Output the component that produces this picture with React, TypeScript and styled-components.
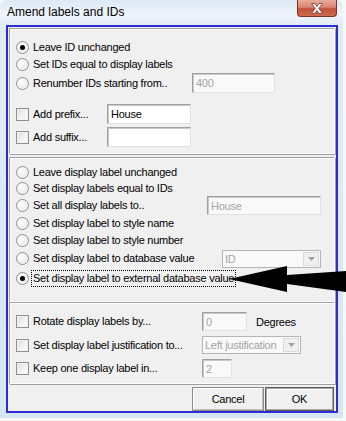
import React from 'react';
import styled, { createGlobalStyle } from 'styled-components';

const Global = createGlobalStyle`
  html, body { margin: 0; padding: 0; background: #f7f8f8; }
  body {
    width: 346px; height: 421px; overflow: hidden;
    font-family: "Liberation Sans", Arial, sans-serif;
    font-size: 11px; color: #000;
    letter-spacing: -0.25px;
  }
  * { box-sizing: border-box; }
`;

const Window = styled.div`
  position: relative;
  width: 343px;
  height: 418px;
  border-radius: 7px 7px 0 0;
  background: linear-gradient(to bottom, #dce8f5 0px, #eef4fb 14px, #e2ecf6 25px, #d5e5f2 100%);
  padding: 0 5px 5px 6px;
  display: flex;
  flex-direction: column;
`;

const TitleBar = styled.div`
  height: 25px;
  display: flex;
  align-items: flex-start;
  padding: 0 1px 0 1px;
`;

const Title = styled.div`
  flex: 1;
  padding-top: 5px;
  font-family: "Liberation Sans", Arial, sans-serif;
  font-size: 12px;
  letter-spacing: 0;
  color: #000;
`;

const CloseButton = styled.div`
  width: 40px;
  height: 17px;
  border: 1px solid #7a3228;
  border-top: none;
  border-radius: 0 0 4px 4px;
  background: linear-gradient(to bottom, #e9ab9c 0%, #d98470 45%, #c2503a 55%, #cf6a50 100%);
  display: flex;
  align-items: center;
  justify-content: center;
`;

const Client = styled.div`
  flex: 1;
  border: 2px solid #2c2cd2;
  background: #f0f0f0;
  padding: 1px 1px 0 1px;
  display: flex;
  flex-direction: column;
`;

const Panel = styled.div<{ $pt: number; $pb: number; $mt?: number }>`
  margin-top: ${(p) => p.$mt ?? 0}px;
  border-top: 1px solid #a0a0a0;
  border-left: 1px solid #a0a0a0;
  border-bottom: 1px solid #ffffff;
  border-right: 1px solid #ffffff;
  box-shadow: inset 1px 1px 0 #ffffff, 1px 1px 0 #a0a0a0;
  padding: ${(p) => p.$pt}px 0 ${(p) => p.$pb}px 6px;
  display: flex;
  flex-direction: column;
`;

const Row = styled.div<{ $h: number; $mt?: number }>`
  height: ${(p) => p.$h}px;
  margin-top: ${(p) => p.$mt ?? 0}px;
  display: flex;
  align-items: center;
`;

const RadioCircle = styled.span<{ $on?: boolean }>`
  position: relative;
  width: 13px;
  height: 13px;
  flex: none;
  border-radius: 50%;
  border: 1px solid #8e8f8f;
  background: radial-gradient(circle at 35% 35%, #ffffff 0%, #f2f2f2 45%, #d8d8d8 100%);
  box-shadow: inset 0 0 0 1px #f6f6f6;
  &::after {
    content: '';
    display: ${(p) => (p.$on ? 'block' : 'none')};
    position: absolute;
    left: 3px;
    top: 3px;
    width: 5px;
    height: 5px;
    border-radius: 50%;
    background: #000;
  }
`;

const CheckBox = styled.span`
  width: 13px;
  height: 13px;
  flex: none;
  border: 1px solid #8e8f8f;
  background: linear-gradient(135deg, #dcdcdc 0%, #f4f4f4 60%, #ffffff 100%);
  box-shadow: inset 0 0 0 1px #f2f2f2;
`;

const Label = styled.span<{ $w?: number; $focus?: boolean }>`
  margin-left: ${(p) => (p.$focus ? 2 : 4)}px;
  ${(p) => (p.$w ? `width: ${p.$w}px; flex: none;` : '')}
  white-space: nowrap;
  line-height: 15px;
  ${(p) =>
    p.$focus
      ? `border: 1px dotted #000; padding: 0 1px; height: 17px;`
      : ''}
`;

const TextBox = styled.div<{ $w: number; $h: number; $disabled?: boolean }>`
  width: ${(p) => p.$w}px;
  height: ${(p) => p.$h}px;
  flex: none;
  border-top: 1px solid #a0a0a0;
  border-left: 1px solid #a0a0a0;
  border-bottom: 1px solid #e3e3e3;
  border-right: 1px solid #e3e3e3;
  box-shadow: inset 1px 1px 0 #c8c8c8;
  background: ${(p) => (p.$disabled ? '#f9f9f9' : '#ffffff')};
  color: ${(p) => (p.$disabled ? '#a3a3a3' : '#000')};
  padding: 2px 0 0 3px;
  line-height: 14px;
  white-space: nowrap;
  overflow: hidden;
`;

const Combo = styled.div<{ $w: number }>`
  width: ${(p) => p.$w}px;
  height: 18px;
  flex: none;
  display: flex;
  border: 1px solid #b5b5b5;
  background: #f9f9f9;
  color: #a3a3a3;
`;

const ComboText = styled.div`
  flex: 1;
  min-width: 0;
  padding: 1px 0 0 2px;
  line-height: 14px;
  white-space: nowrap;
  overflow: hidden;
`;

const ComboButton = styled.div`
  width: 16px;
  flex: none;
  margin: 1px;
  border: 1px solid #dadada;
  background: #f0f0f0;
  display: flex;
  align-items: center;
  justify-content: center;
`;

const Unit = styled.span`
  margin-left: 9px;
`;

const ButtonRow = styled.div`
  display: flex;
  justify-content: flex-end;
  gap: 1px;
  padding: 3px 1px 0 0;
`;

const Button = styled.div<{ $w: number; $default?: boolean }>`
  width: ${(p) => p.$w}px;
  height: 24px;
  display: flex;
  align-items: center;
  justify-content: center;
  border: 1px solid ${(p) => (p.$default ? '#5a5a5a' : '#8a8a8a')};
  box-shadow: ${(p) =>
    p.$default
      ? 'inset 0 0 0 1px #a8a8a8, inset 2px 2px 0 #ffffff'
      : 'inset 1px 1px 0 #ffffff, inset -1px -1px 0 #c0c0c0'};
  background: #f0f0f0;
  color: #000;
`;

const ArrowLayer = styled.svg`
  position: absolute;
  left: 0;
  top: 0;
  pointer-events: none;
`;

const Radio = ({ on }: { on?: boolean }) => <RadioCircle $on={on} />;

const DownTri = () => (
  <svg width="7" height="4" viewBox="0 0 7 4">
    <path d="M0 0 L7 0 L3.5 4 Z" fill="#a0a0a0" />
  </svg>
);

export default function App() {
  return (
    <>
      <Global />
      <Window>
        <TitleBar>
          <Title>Amend labels and IDs</Title>
          <CloseButton>
            <svg width="14" height="11" viewBox="0 0 14 11">
              <path
                d="M1.5 0.5 L5 0.5 L7 3.5 L9 0.5 L12.5 0.5 L8.8 5.5 L12.5 10.5 L9 10.5 L7 7.5 L5 10.5 L1.5 10.5 L5.2 5.5 Z"
                fill="#ffffff"
                stroke="#7a3a30"
                strokeWidth="0.8"
              />
            </svg>
          </CloseButton>
        </TitleBar>
        <Client>
          <Panel $pt={9} $pb={6}>
            <Row $h={18}>
              <Radio on />
              <Label>Leave ID unchanged</Label>
            </Row>
            <Row $h={17}>
              <Radio />
              <Label>Set IDs equal to display labels</Label>
            </Row>
            <Row $h={20}>
              <Radio />
              <Label $w={159}>Renumber IDs starting from..</Label>
              <TextBox $w={83} $h={20} $disabled>400</TextBox>
            </Row>
            <Row $h={20} $mt={11}>
              <CheckBox />
              <Label $w={74}>Add prefix...</Label>
              <TextBox $w={84} $h={20}>House</TextBox>
            </Row>
            <Row $h={20} $mt={3}>
              <CheckBox />
              <Label $w={74}>Add suffix...</Label>
              <TextBox $w={84} $h={20} />
            </Row>
          </Panel>
          <Panel $pt={6} $pb={13} $mt={3}>
            <Row $h={16}>
              <Radio />
              <Label>Leave display label unchanged</Label>
            </Row>
            <Row $h={17}>
              <Radio />
              <Label>Set display labels equal to IDs</Label>
            </Row>
            <Row $h={17}>
              <Radio />
              <Label $w={174}>Set all display labels to..</Label>
              <TextBox $w={114} $h={19} $disabled>House</TextBox>
            </Row>
            <Row $h={18}>
              <Radio />
              <Label>Set display label to style name</Label>
            </Row>
            <Row $h={17}>
              <Radio />
              <Label>Set display label to style number</Label>
            </Row>
            <Row $h={19}>
              <Radio />
              <Label $w={189}>Set display label to database value</Label>
              <Combo $w={99}>
                <ComboText>ID</ComboText>
                <ComboButton>
                  <DownTri />
                </ComboButton>
              </Combo>
            </Row>
            <Row $h={20}>
              <Radio on />
              <Label $focus>Set display label to external database value</Label>
            </Row>
          </Panel>
          <Panel $pt={9} $pb={5}>
            <Row $h={19}>
              <CheckBox />
              <Label $w={169}>Rotate display labels by...</Label>
              <TextBox $w={45} $h={19} $disabled>0</TextBox>
              <Unit>Degrees</Unit>
            </Row>
            <Row $h={18} $mt={5}>
              <CheckBox />
              <Label $w={169}>Set display label justification to...</Label>
              <Combo $w={99}>
                <ComboText>Left justification</ComboText>
                <ComboButton>
                  <DownTri />
                </ComboButton>
              </Combo>
            </Row>
            <Row $h={19} $mt={5}>
              <CheckBox />
              <Label $w={169}>Keep one display label in...</Label>
              <TextBox $w={30} $h={19} $disabled>2</TextBox>
            </Row>
          </Panel>
          <ButtonRow>
            <Button $w={72}>Cancel</Button>
            <Button $w={69} $default>OK</Button>
          </ButtonRow>
        </Client>
        <ArrowLayer width="346" height="421" viewBox="0 0 346 421">
          <path d="M229 279 L287 266 L287 275 L346 271 L346 292 L287 284 L287 292 Z" fill="#000" />
        </ArrowLayer>
      </Window>
    </>
  );
}
